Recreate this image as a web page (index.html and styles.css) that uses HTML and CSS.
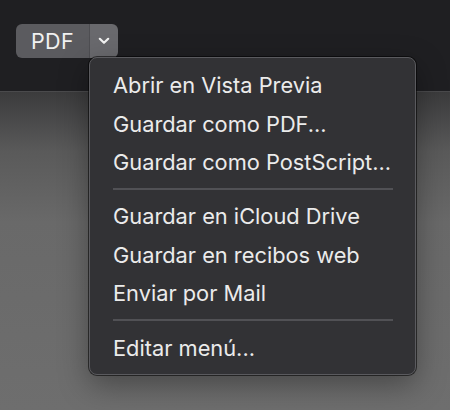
FILE: index.html
```html
<!DOCTYPE html>
<html lang="es">
<head>
<meta charset="utf-8">
<link rel="stylesheet" href="styles.css">
</head>
<body>
<div class="page">
  <header class="toolbar">
    <div class="pdf-btn">
      <span class="pdf-label">PDF</span>
      <span class="pdf-arrow">
        <svg width="12" height="8" viewBox="0 0 12 8"><path d="M1.8 1.8 L6 5.8 L10.2 1.8" fill="none" stroke="#f2f2f2" stroke-width="2.2" stroke-linecap="round" stroke-linejoin="round"/></svg>
      </span>
    </div>
  </header>
  <main class="content"></main>
  <nav class="menu">
    <div class="item">Abrir en Vista Previa</div>
    <div class="item">Guardar como PDF...</div>
    <div class="item">Guardar como PostScript...</div>
    <div class="sep"></div>
    <div class="item">Guardar en iCloud Drive</div>
    <div class="item">Guardar en recibos web</div>
    <div class="item">Enviar por Mail</div>
    <div class="sep"></div>
    <div class="item">Editar menú...</div>
  </nav>
</div>
</body>
</html>
```

FILE: styles.css
```css
html, body {
  margin: 0;
  padding: 0;
}
body {
  width: 450px;
  height: 410px;
  overflow: hidden;
  font-family: Inter, "Liberation Sans", sans-serif;
  background: #6c6c6c;
}
.page {
  position: relative;
  width: 450px;
  height: 410px;
  display: flex;
  flex-direction: column;
}
.toolbar {
  background: #1f1f22;
  border-bottom: 1px solid #4a4a4c;
  padding: 24px 0 0 16px;
  box-sizing: border-box;
  height: 92px;
}
.pdf-btn {
  display: inline-flex;
  height: 34px;
  border-radius: 6px;
  overflow: hidden;
}
.pdf-label {
  width: 73px;
  background: #5b5b5f;
  color: #f0f0f0;
  font-size: 21.5px;
  display: flex;
  align-items: center;
  justify-content: center;
  letter-spacing: 0.3px;
}
.pdf-arrow {
  width: 29px;
  background: #69696d;
  display: flex;
  align-items: center;
  justify-content: center;
  border-left: 1px solid #4e4e52;
  box-sizing: border-box;
}
.content {
  flex: 1;
  background: linear-gradient(to bottom, #3b3b3c 0px, #5a5a5a 60px, #696969 130px, #6e6e6e 318px);
}
.menu {
  position: absolute;
  left: 89px;
  top: 57px;
  width: 327px;
  height: 318px;
  box-sizing: border-box;
  background: #323235;
  border: 1px solid #5a5a5e;
  border-radius: 8px;
  box-shadow: 0 0 0 1px rgba(0,0,0,0.55), 0 10px 30px rgba(0,0,0,0.35);
  padding: 8px 22px 0 23px;
  color: #ebebeb;
}
.item {
  height: 38.6px;
  line-height: 38.6px;
  font-size: 21.8px;
  white-space: nowrap;
}
.sep {
  height: 2px;
  background: #515155;
  margin: 6px 0 7.5px;
}
```
